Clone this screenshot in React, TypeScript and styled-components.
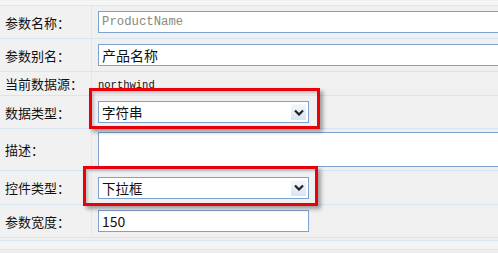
import { createGlobalStyle, styled } from 'styled-components';

const GlobalStyle = createGlobalStyle`
  html, body {
    margin: 0;
    padding: 0;
    background: #efefef;
    overflow: hidden;
  }
  body {
    font-family: 'Noto Sans CJK SC', 'Noto Sans', sans-serif;
  }
`;

type RowDef = {
  label: string;
  height: number;
  kind: 'input' | 'text' | 'select' | 'textarea' | 'short';
  value?: string;
  placeholder?: boolean;
  mark?: { top: number; right: number; bottom: number; left: number };
};

const rows: RowDef[] = [
  { label: '参数名称：', height: 33, kind: 'input', value: 'ProductName', placeholder: true },
  { label: '参数别名：', height: 33, kind: 'input', value: '产品名称' },
  { label: '当前数据源：', height: 24, kind: 'text', value: 'northwind' },
  {
    label: '数据类型：',
    height: 33,
    kind: 'select',
    value: '字符串',
    mark: { top: -13, right: -11, bottom: -6, left: -9 },
  },
  { label: '描述：', height: 42, kind: 'textarea' },
  {
    label: '控件类型：',
    height: 34,
    kind: 'select',
    value: '下拉框',
    mark: { top: -11, right: -9, bottom: -7, left: -15 },
  },
  { label: '参数宽度：', height: 33, kind: 'short', value: '150' },
];

const App = () => {
  return (
    <>
      <GlobalStyle />
      <Form>
        <TopRule />
        {rows.map(row => (
          <Row key={row.label} $height={row.height}>
            <Label>{row.label}</Label>
            <Field>
              {row.kind === 'input' && (
                <TextBox $wide $muted={row.placeholder} $mono={row.placeholder}>
                  {row.value}
                </TextBox>
              )}
              {row.kind === 'short' && <TextBox>{row.value}</TextBox>}
              {row.kind === 'text' && <Plain>{row.value}</Plain>}
              {row.kind === 'textarea' && <TextArea />}
              {row.kind === 'select' && row.mark && (
                <Highlight
                  $top={row.mark.top}
                  $right={row.mark.right}
                  $bottom={row.mark.bottom}
                  $left={row.mark.left}
                >
                  <Select>
                    <span>{row.value}</span>
                    <Arrow>
                      <svg width="10" height="7" viewBox="0 0 10 7">
                        <path d="M1 1.5 L5 5.5 L9 1.5" fill="none" stroke="#222" strokeWidth="2.2" />
                      </svg>
                    </Arrow>
                  </Select>
                </Highlight>
              )}
            </Field>
          </Row>
        ))}
        <BottomRule />
      </Form>
    </>
  );
};

const Form = styled.div`
  width: 498px;
  height: 253px;
  display: flex;
  flex-direction: column;
  background: #efefef;
`;

const TopRule = styled.div`
  height: 5px;
  border-top: 1px solid #f6f8fa;
  border-bottom: 1px solid #d9e6f4;
  margin-top: 1px;
  background: #f3f5f7;
  box-sizing: border-box;
`;

const BottomRule = styled.div`
  margin-top: 2px;
  height: 8px;
  border-top: 1px solid #d9e6f4;
  border-bottom: 1px solid #dde8f4;
  background: #f3f4f5;
`;

const Row = styled.div<{ $height: number }>`
  display: grid;
  grid-template-columns: 92px 1fr;
  height: ${props => props.$height}px;
  box-sizing: border-box;
  border-bottom: 1px solid #d6e4f3;
  box-shadow: inset 0 -2px 0 #f7f9fb;
`;

const Label = styled.div`
  display: flex;
  align-items: center;
  padding-left: 5px;
  font-size: 13px;
  color: #111;
  background: #f1f1f1;
  border-right: 1px solid #dfe8f1;
  white-space: nowrap;
`;

const Field = styled.div`
  display: flex;
  align-items: center;
  padding-left: 6px;
  background: #f0f0f0;
  overflow: visible;
  min-width: 0;
`;

const TextBox = styled.div<{ $wide?: boolean; $muted?: boolean; $mono?: boolean }>`
  box-sizing: border-box;
  width: ${props => (props.$wide ? '420px' : '211px')};
  flex-shrink: 0;
  height: 22px;
  display: flex;
  align-items: center;
  padding-left: 3px;
  background: #fff;
  border: 1px solid #7fa1cf;
  color: ${props => (props.$muted ? '#8a8a7a' : '#111')};
  font-family: ${props =>
    props.$mono ? "'Liberation Mono', monospace" : "'Noto Sans CJK SC', 'Noto Sans', sans-serif"};
  font-size: ${props => (props.$mono ? '12.3px' : '14px')};
`;

const Plain = styled.div`
  font-family: 'Liberation Mono', monospace;
  font-size: 10.5px;
  color: #111;
  margin-top: 2px;
`;

const TextArea = styled.div`
  box-sizing: border-box;
  width: 420px;
  flex-shrink: 0;
  height: 35px;
  background: #fff;
  border: 1px solid #7fa1cf;
`;

const Highlight = styled.div<{ $top: number; $right: number; $bottom: number; $left: number }>`
  position: relative;
  &::after {
    content: '';
    position: absolute;
    top: ${props => props.$top}px;
    right: ${props => props.$right}px;
    bottom: ${props => props.$bottom}px;
    left: ${props => props.$left}px;
    border: 3px solid #e8000b;
    box-shadow: 3px 3px 4px rgba(0, 0, 0, 0.35), inset 2px 2px 3px rgba(0, 0, 0, 0.2);
    pointer-events: none;
  }
`;

const Select = styled.div`
  box-sizing: border-box;
  width: 211px;
  height: 22px;
  display: flex;
  align-items: center;
  justify-content: space-between;
  padding: 0 2px 0 3px;
  background: #fff;
  border: 1px solid #7fa1cf;
  font-size: 13.5px;
  color: #111;
`;

const Arrow = styled.div`
  width: 15px;
  height: 16px;
  display: flex;
  align-items: center;
  justify-content: center;
  background: linear-gradient(#f4f8fc, #d7e5f3);
`;

export default App;
